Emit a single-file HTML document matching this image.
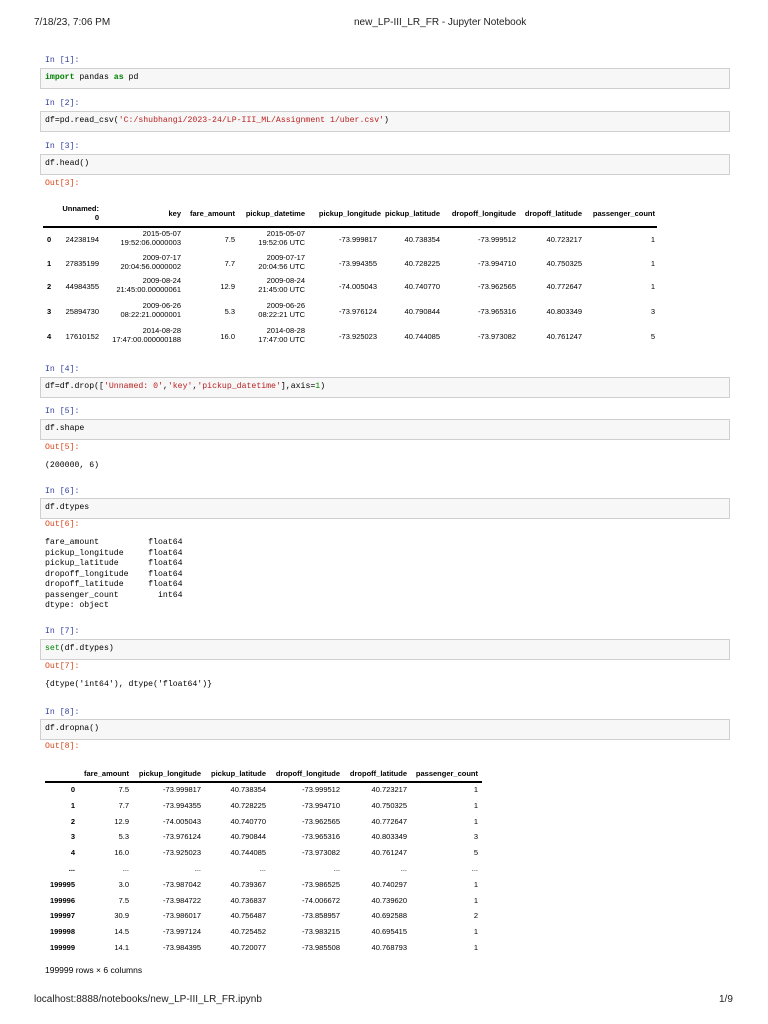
<!DOCTYPE html>
<html><head><meta charset="utf-8"><style>
body{margin:0;width:768px;height:1024px;background:#fff;position:relative;overflow:hidden;font-family:"Liberation Sans",sans-serif;color:#000}
div{position:absolute;white-space:pre}
.h{font-size:10px;color:#222}
.p{font-family:"Liberation Mono",monospace;font-size:8.2px;color:#303f9f;line-height:10px}
.o{font-family:"Liberation Mono",monospace;font-size:8.2px;color:#d84315;line-height:10px}
.box{left:40px;width:688px;height:19px;border:1px solid #cfcfcf;background:#f7f7f7}
.c{font-family:"Liberation Mono",monospace;font-size:8.2px;line-height:10px;color:#000}
.k{color:#008000;font-weight:bold}
.s{color:#ba2121}
.t{font-size:7.5px;line-height:9px;text-align:right}
.b{font-weight:bold}
.ln{height:1.5px;background:#000}
</style></head><body>
<div class="h" style="left:34px;top:17px">7/18/23, 7:06 PM</div>
<div class="h" style="left:354px;top:17px">new_LP-III_LR_FR - Jupyter Notebook</div>

<div class="p" style="left:45px;top:56px">In [1]:</div>
<div class="box" style="top:68px"></div>
<div class="c" style="left:45px;top:73px"><span class="k">import</span> pandas <span class="k">as</span> pd</div>

<div class="p" style="left:45px;top:99px">In [2]:</div>
<div class="box" style="top:111px"></div>
<div class="c" style="left:45px;top:116px">df=pd.read_csv(<span class="s">'C:/shubhangi/2023-24/LP-III_ML/Assignment 1/uber.csv'</span>)</div>

<div class="p" style="left:45px;top:142px">In [3]:</div>
<div class="box" style="top:154px"></div>
<div class="c" style="left:45px;top:159px">df.head()</div>
<div class="o" style="left:45px;top:179px">Out[3]:</div>

<div class="t b" style="right:669px;top:204px">Unnamed:<br>0</div>
<div class="t b" style="right:587px;top:209px">key</div>
<div class="t b" style="right:533px;top:209px">fare_amount</div>
<div class="t b" style="right:463px;top:209px">pickup_datetime</div>
<div class="t b" style="right:387px;top:209px">pickup_longitude</div>
<div class="t b" style="right:328px;top:209px">pickup_latitude</div>
<div class="t b" style="right:252px;top:209px">dropoff_longitude</div>
<div class="t b" style="right:186px;top:209px">dropoff_latitude</div>
<div class="t b" style="right:113px;top:209px">passenger_count</div>
<div class="ln" style="left:43px;width:614px;top:226px"></div>

<div class="t b" style="left:47px;top:235px">0</div>
<div class="t" style="right:669px;top:235px">24238194</div>
<div class="t" style="right:587px;top:229px">2015-05-07<br>19:52:06.0000003</div>
<div class="t" style="right:533px;top:235px">7.5</div>
<div class="t" style="right:463px;top:229px">2015-05-07<br>19:52:06 UTC</div>
<div class="t" style="right:391px;top:235px">-73.999817</div>
<div class="t" style="right:328px;top:235px">40.738354</div>
<div class="t" style="right:252px;top:235px">-73.999512</div>
<div class="t" style="right:186px;top:235px">40.723217</div>
<div class="t" style="right:113px;top:235px">1</div>

<div class="t b" style="left:47px;top:259px">1</div>
<div class="t" style="right:669px;top:259px">27835199</div>
<div class="t" style="right:587px;top:253px">2009-07-17<br>20:04:56.0000002</div>
<div class="t" style="right:533px;top:259px">7.7</div>
<div class="t" style="right:463px;top:253px">2009-07-17<br>20:04:56 UTC</div>
<div class="t" style="right:391px;top:259px">-73.994355</div>
<div class="t" style="right:328px;top:259px">40.728225</div>
<div class="t" style="right:252px;top:259px">-73.994710</div>
<div class="t" style="right:186px;top:259px">40.750325</div>
<div class="t" style="right:113px;top:259px">1</div>

<div class="t b" style="left:47px;top:282px">2</div>
<div class="t" style="right:669px;top:282px">44984355</div>
<div class="t" style="right:587px;top:276px">2009-08-24<br>21:45:00.00000061</div>
<div class="t" style="right:533px;top:282px">12.9</div>
<div class="t" style="right:463px;top:276px">2009-08-24<br>21:45:00 UTC</div>
<div class="t" style="right:391px;top:282px">-74.005043</div>
<div class="t" style="right:328px;top:282px">40.740770</div>
<div class="t" style="right:252px;top:282px">-73.962565</div>
<div class="t" style="right:186px;top:282px">40.772647</div>
<div class="t" style="right:113px;top:282px">1</div>

<div class="t b" style="left:47px;top:307px">3</div>
<div class="t" style="right:669px;top:307px">25894730</div>
<div class="t" style="right:587px;top:301px">2009-06-26<br>08:22:21.0000001</div>
<div class="t" style="right:533px;top:307px">5.3</div>
<div class="t" style="right:463px;top:301px">2009-06-26<br>08:22:21 UTC</div>
<div class="t" style="right:391px;top:307px">-73.976124</div>
<div class="t" style="right:328px;top:307px">40.790844</div>
<div class="t" style="right:252px;top:307px">-73.965316</div>
<div class="t" style="right:186px;top:307px">40.803349</div>
<div class="t" style="right:113px;top:307px">3</div>

<div class="t b" style="left:47px;top:332px">4</div>
<div class="t" style="right:669px;top:332px">17610152</div>
<div class="t" style="right:587px;top:326px">2014-08-28<br>17:47:00.000000188</div>
<div class="t" style="right:533px;top:332px">16.0</div>
<div class="t" style="right:463px;top:326px">2014-08-28<br>17:47:00 UTC</div>
<div class="t" style="right:391px;top:332px">-73.925023</div>
<div class="t" style="right:328px;top:332px">40.744085</div>
<div class="t" style="right:252px;top:332px">-73.973082</div>
<div class="t" style="right:186px;top:332px">40.761247</div>
<div class="t" style="right:113px;top:332px">5</div>

<div class="p" style="left:45px;top:365px">In [4]:</div>
<div class="box" style="top:377px"></div>
<div class="c" style="left:45px;top:382px">df=df.drop([<span class="s">'Unnamed: 0'</span>,<span class="s">'key'</span>,<span class="s">'pickup_datetime'</span>],axis=<span style="color:#080">1</span>)</div>

<div class="p" style="left:45px;top:407px">In [5]:</div>
<div class="box" style="top:419px"></div>
<div class="c" style="left:45px;top:424px">df.shape</div>
<div class="o" style="left:45px;top:443px">Out[5]:</div>
<div class="c" style="left:45px;top:461px">(200000, 6)</div>

<div class="p" style="left:45px;top:487px">In [6]:</div>
<div class="box" style="top:498px"></div>
<div class="c" style="left:45px;top:503px">df.dtypes</div>
<div class="o" style="left:45px;top:520px">Out[6]:</div>
<div class="c" style="left:45px;top:538px;line-height:10.5px">fare_amount          float64
pickup_longitude     float64
pickup_latitude      float64
dropoff_longitude    float64
dropoff_latitude     float64
passenger_count        int64
dtype: object</div>

<div class="p" style="left:45px;top:627px">In [7]:</div>
<div class="box" style="top:639px"></div>
<div class="c" style="left:45px;top:644px"><span style="color:#008000">set</span>(df.dtypes)</div>
<div class="o" style="left:45px;top:662px">Out[7]:</div>
<div class="c" style="left:45px;top:680px">{dtype('int64'), dtype('float64')}</div>

<div class="p" style="left:45px;top:708px">In [8]:</div>
<div class="box" style="top:719px"></div>
<div class="c" style="left:45px;top:724px">df.dropna()</div>
<div class="o" style="left:45px;top:742px">Out[8]:</div>

<div class="t b" style="right:639px;top:769px">fare_amount</div>
<div class="t b" style="right:567px;top:769px">pickup_longitude</div>
<div class="t b" style="right:502px;top:769px">pickup_latitude</div>
<div class="t b" style="right:428px;top:769px">dropoff_longitude</div>
<div class="t b" style="right:361px;top:769px">dropoff_latitude</div>
<div class="t b" style="right:290px;top:769px">passenger_count</div>
<div class="ln" style="left:45px;width:437px;top:781px"></div>

<div class="t" style="right:693px;top:782px;line-height:15.8px;font-weight:bold">0
1
2
3
4
...
199995
199996
199997
199998
199999</div>
<div class="t" style="right:639px;top:782px;line-height:15.8px">7.5
7.7
12.9
5.3
16.0
...
3.0
7.5
30.9
14.5
14.1</div>
<div class="t" style="right:567px;top:782px;line-height:15.8px">-73.999817
-73.994355
-74.005043
-73.976124
-73.925023
...
-73.987042
-73.984722
-73.986017
-73.997124
-73.984395</div>
<div class="t" style="right:502px;top:782px;line-height:15.8px">40.738354
40.728225
40.740770
40.790844
40.744085
...
40.739367
40.736837
40.756487
40.725452
40.720077</div>
<div class="t" style="right:428px;top:782px;line-height:15.8px">-73.999512
-73.994710
-73.962565
-73.965316
-73.973082
...
-73.986525
-74.006672
-73.858957
-73.983215
-73.985508</div>
<div class="t" style="right:361px;top:782px;line-height:15.8px">40.723217
40.750325
40.772647
40.803349
40.761247
...
40.740297
40.739620
40.692588
40.695415
40.768793</div>
<div class="t" style="right:290px;top:782px;line-height:15.8px">1
1
1
3
5
...
1
1
2
1
1</div>
<div style="left:45px;top:965px;font-size:8.5px">199999 rows × 6 columns</div>

<div class="h" style="left:34px;top:994px">localhost:8888/notebooks/new_LP-III_LR_FR.ipynb</div>
<div class="h" style="left:719px;top:994px">1/9</div>
</body></html>
